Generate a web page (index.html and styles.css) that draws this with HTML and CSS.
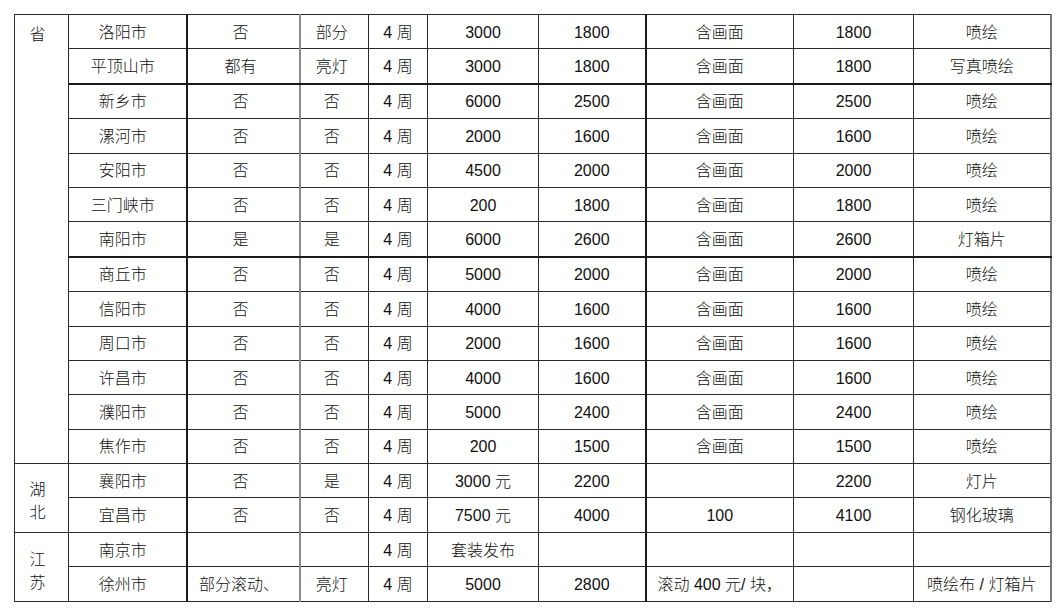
FILE: index.html
```html
<!DOCTYPE html>
<html lang="zh-CN">
<head>
<meta charset="utf-8">
<title>广告报价表</title>
<link rel="stylesheet" href="styles.css">
</head>
<body>
<div class="page">
<table class="sheet">
<colgroup>
<col class="c-prov">
<col class="c-city">
<col class="c-a">
<col class="c-b">
<col class="c-wk">
<col class="c-p1">
<col class="c-p2">
<col class="c-p3">
<col class="c-p4">
<col class="c-p5">
</colgroup>
<tbody>
<tr><td class="prov prov-top" rowspan="13">省</td><td class="city">洛阳市</td><td class="yn">否</td><td class="yn">部分</td><td>4 周</td><td>3000</td><td>1800</td><td>含画面</td><td>1800</td><td>喷绘</td></tr>
<tr><td class="city">平顶山市</td><td class="yn">都有</td><td class="yn">亮灯</td><td>4 周</td><td>3000</td><td>1800</td><td>含画面</td><td>1800</td><td>写真喷绘</td></tr>
<tr class="thick"><td class="city">新乡市</td><td class="yn">否</td><td class="yn">否</td><td>4 周</td><td>6000</td><td>2500</td><td>含画面</td><td>2500</td><td>喷绘</td></tr>
<tr><td class="city">漯河市</td><td class="yn">否</td><td class="yn">否</td><td>4 周</td><td>2000</td><td>1600</td><td>含画面</td><td>1600</td><td>喷绘</td></tr>
<tr><td class="city">安阳市</td><td class="yn">否</td><td class="yn">否</td><td>4 周</td><td>4500</td><td>2000</td><td>含画面</td><td>2000</td><td>喷绘</td></tr>
<tr><td class="city">三门峡市</td><td class="yn">否</td><td class="yn">否</td><td>4 周</td><td>200</td><td>1800</td><td>含画面</td><td>1800</td><td>喷绘</td></tr>
<tr><td class="city">南阳市</td><td class="yn">是</td><td class="yn">是</td><td>4 周</td><td>6000</td><td>2600</td><td>含画面</td><td>2600</td><td>灯箱片</td></tr>
<tr class="thick"><td class="city">商丘市</td><td class="yn">否</td><td class="yn">否</td><td>4 周</td><td>5000</td><td>2000</td><td>含画面</td><td>2000</td><td>喷绘</td></tr>
<tr class="light"><td class="city">信阳市</td><td class="yn">否</td><td class="yn">否</td><td>4 周</td><td>4000</td><td>1600</td><td>含画面</td><td>1600</td><td>喷绘</td></tr>
<tr><td class="city">周口市</td><td class="yn">否</td><td class="yn">否</td><td>4 周</td><td>2000</td><td>1600</td><td>含画面</td><td>1600</td><td>喷绘</td></tr>
<tr><td class="city">许昌市</td><td class="yn">否</td><td class="yn">否</td><td>4 周</td><td>4000</td><td>1600</td><td>含画面</td><td>1600</td><td>喷绘</td></tr>
<tr><td class="city">濮阳市</td><td class="yn">否</td><td class="yn">否</td><td>4 周</td><td>5000</td><td>2400</td><td>含画面</td><td>2400</td><td>喷绘</td></tr>
<tr><td class="city">焦作市</td><td class="yn">否</td><td class="yn">否</td><td>4 周</td><td>200</td><td>1500</td><td>含画面</td><td>1500</td><td>喷绘</td></tr>
<tr><td class="prov prov-hb" rowspan="2">湖<br>北</td><td class="city">襄阳市</td><td class="yn">否</td><td class="yn">是</td><td>4 周</td><td>3000 元</td><td>2200</td><td></td><td>2200</td><td>灯片</td></tr>
<tr><td class="city">宜昌市</td><td class="yn">否</td><td class="yn">否</td><td>4 周</td><td>7500 元</td><td>4000</td><td>100</td><td>4100</td><td>钢化玻璃</td></tr>
<tr><td class="prov prov-js" rowspan="2">江<br>苏</td><td class="city">南京市</td><td></td><td></td><td>4 周</td><td>套装发布</td><td></td><td></td><td></td><td></td></tr>
<tr><td class="city">徐州市</td><td class="yn wide">部分滚动、</td><td class="yn">亮灯</td><td>4 周</td><td>5000</td><td>2800</td><td>滚动 400 元/ 块，</td><td></td><td>喷绘布 / 灯箱片</td></tr>
</tbody>
</table>
</div>
</body>
</html>
```

FILE: styles.css
```css
html, body {
  margin: 0;
  padding: 0;
  background: #ffffff;
}

.page {
  padding: 14px 0 0 14px;
}

.sheet {
  border-collapse: collapse;
  table-layout: fixed;
  width: 1037px;
  font-family: "Liberation Sans", "Noto Sans CJK SC", sans-serif;
  font-size: 16px;
  font-weight: 300;
  color: #111;
  border: 1px solid #222;
}

.sheet td {
  border: 1px solid #2a2a2a;
  height: 31.4px;
  padding: 2px 0 0 0;
  text-align: center;
  vertical-align: middle;
  white-space: nowrap;
  line-height: 18px;
}

.c-prov { width: 54px; }
.c-city { width: 118px; border-right: 2px solid #1a1a1a; }
.c-a { width: 113px; border-right: 2px solid #8a8a8a; }
.c-b { width: 69px; }
.c-wk { width: 59px; }
.c-p1 { width: 111px; }
.c-p2 { width: 107px; border-right: 2px solid #1a1a1a; }
.c-p3 { width: 148px; }
.c-p4 { width: 120px; }
.c-p5 { width: 137px; border-right: 2px solid #777; }

.sheet tr.thick td {
  border-top: 2px solid #1a1a1a;
}

.sheet tr.light td {
  border-top: 1px solid #8a8a8a;
}

.sheet td.city {
  padding-right: 9px;
}

.sheet td.yn {
  padding-right: 5px;
}

.sheet td.yn.wide {
  padding-right: 8px;
}

.sheet td.prov {
  padding-right: 8px;
}

.sheet td.prov-top {
  vertical-align: top;
  padding-top: 11px;
}

.sheet td.prov-hb {
  line-height: 23px;
  padding-top: 6px;
}

.sheet td.prov-js {
  line-height: 23px;
  padding-top: 9px;
}
```
